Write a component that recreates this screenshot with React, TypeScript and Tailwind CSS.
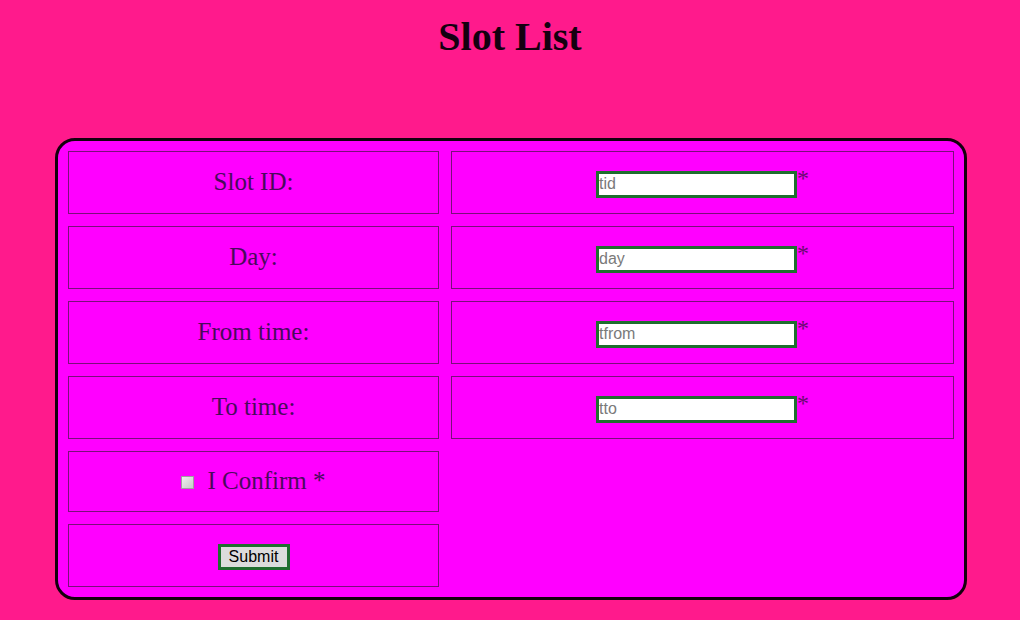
const fields = [
  { label: "Slot ID:", placeholder: "tid" },
  { label: "Day:", placeholder: "day" },
  { label: "From time:", placeholder: "tfrom" },
  { label: "To time:", placeholder: "tto" },
];

const serif = "font-['Liberation_Serif',serif]";
const sans = "font-['Liberation_Sans',Arial,sans-serif]";

function Cell({ children, className = "" }: { children?: React.ReactNode; className?: string }) {
  return (
    <div
      className={`flex items-center justify-center border border-[#7a0f7a] ${className}`}
    >
      {children}
    </div>
  );
}

export default function App() {
  return (
    <div className={`min-h-[620px] w-[1020px] bg-[#ff1a8c] ${serif}`}>
      <h1 className="pt-[17px] text-center text-[40px] font-bold leading-[40px] text-[#140010]">
        Slot List
      </h1>

      <div className="ml-[55px] mt-[81px] w-[912px] rounded-[20px] border-[3px] border-[#14000e] bg-[#ff00ff] px-[10px] pb-[10px] pt-[10px]">
        <div className="flex flex-col gap-[12px]">
          {fields.map((f) => (
            <div key={f.placeholder} className="flex gap-[12px]">
              <Cell className="h-[63px] w-[371px]">
                <span className="mb-[2px] text-[25px] text-[#4a0a5c]">{f.label}</span>
              </Cell>
              <Cell className="h-[63px] w-[503px]">
                <div className="flex items-start">
                  <input
                    placeholder={f.placeholder}
                    className={`mt-[3px] h-[27px] w-[201px] border-[3px] border-[#1f6e2f] bg-white px-0 text-[16px] text-black outline-none placeholder:text-[#7a7a7a] ${sans}`}
                  />
                  <span className="text-[24px] leading-[20px] text-[#6a0a70]">*</span>
                </div>
              </Cell>
            </div>
          ))}

          <div className="flex gap-[12px]">
            <Cell className="h-[61px] w-[371px] gap-[13px]">
              <input
                type="checkbox"
                className="mt-[2px] h-[13px] w-[13px] appearance-none border border-[#a0a0a0] bg-gradient-to-br from-[#f0f0f0] to-[#c8c8c8]"
              />
              <span className="mb-[2px] text-[25px] text-[#4a0a5c]">I Confirm *</span>
            </Cell>
          </div>

          <div className="flex gap-[12px]">
            <Cell className="h-[63px] w-[371px]">
              <button
                type="button"
                className={`mt-[3px] h-[26px] w-[72px] border-[3px] border-[#1f6e2f] bg-[#dcdcdc] text-[16px] leading-none text-black ${sans}`}
              >
                Submit
              </button>
            </Cell>
          </div>
        </div>
      </div>
    </div>
  );
}
